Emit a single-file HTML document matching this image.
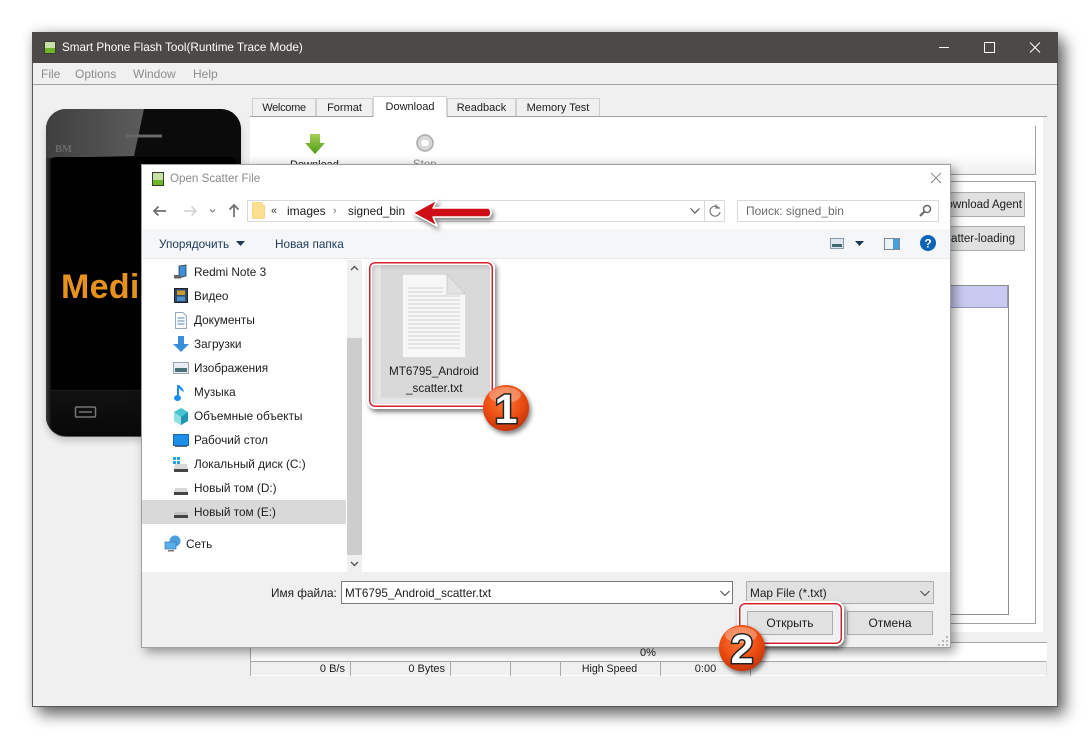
<!DOCTYPE html>
<html><head><meta charset="utf-8">
<style>
html,body{margin:0;padding:0;background:#fff;width:1091px;height:740px;overflow:hidden}
body{position:relative;font-family:"Liberation Sans",sans-serif;font-size:12px;color:#1c1c1c}
div,span.t,svg{position:absolute}
.t{position:absolute;white-space:nowrap;line-height:16px}
.tab{position:absolute;top:98px;height:18px;background:#f0f0f0;border:1px solid #d0d0d0;border-bottom:0;box-sizing:border-box;text-align:center;line-height:19px;font-size:11px}
.btn{position:absolute;background:#e1e1e1;border:1px solid #adadad;box-sizing:border-box;text-align:center}
.cell{position:absolute;top:661px;height:15px;border-left:1px solid #a8a8a8;box-sizing:border-box;text-align:right;padding-right:5px;line-height:16px;font-size:11px}
.nav{left:194px;font-size:11.8px}
</style></head><body>

<!-- main window -->
<div style="left:32px;top:32px;width:1026px;height:675px;background:#f0f0f0;box-shadow:7px 8px 14px rgba(0,0,0,.55),0 0 10px rgba(0,0,0,.18);border:1px solid #5a5a5a;border-top:0;box-sizing:border-box"></div>
<div style="left:32px;top:32px;width:1026px;height:31px;background:#4c4a48"></div>
<svg style="left:44px;top:41px" width="12" height="13" viewBox="0 0 12 13"><rect width="12" height="13" fill="#3b3a2e"/><rect x="1" y="1" width="10" height="6" fill="#c8dfa8"/><rect x="1" y="7" width="10" height="5" fill="#6fb52c"/></svg>
<span class="t" style="left:62px;top:40px;color:#fff;font-size:11.7px">Smart Phone Flash Tool(Runtime Trace Mode)</span>
<svg style="left:930px;top:32px" width="128" height="31" viewBox="0 0 128 31" fill="none" stroke="#fff" stroke-width="1"><path d="M9 15.500H19"/><rect x="54.500" y="10.500" width="10" height="10"/><path d="M100 10.500l10 10M110 10.500l-10 10"/></svg>
<div style="left:33px;top:84px;width:1024px;height:1px;background:#a0a0a0"></div>
<span class="t" style="left:41px;top:66px;color:#8c8c8c;font-size:12px">File</span>
<span class="t" style="left:75px;top:66px;color:#8c8c8c;font-size:12px">Options</span>
<span class="t" style="left:133px;top:66px;color:#8c8c8c;font-size:12px">Window</span>
<span class="t" style="left:193px;top:66px;color:#8c8c8c;font-size:12px">Help</span>

<!-- phone -->
<div style="left:46px;top:109px;width:195px;height:327px;border-radius:20px;background:#0b0b0b;box-shadow:0 1px 0 #555,0 5px 7px rgba(0,0,0,.18);overflow:hidden">
  <div style="left:0;top:280px;width:195px;height:47px;background:linear-gradient(#121212,#080808)"></div>
  <div style="left:0;top:0;width:5px;height:327px;background:linear-gradient(90deg,#3d3d3d,#111)"></div>
  <svg style="left:0;top:0" width="195" height="60" viewBox="0 0 195 60"><defs><linearGradient id="gl" x1="0" y1="0" x2="1" y2="0"><stop offset="0" stop-color="#3f3f3f"/><stop offset="1" stop-color="#5c5c5c"/></linearGradient></defs><path d="M0 49V0H98L88 47Z" fill="url(#gl)"/><path d="M80 27H116" stroke="#676767" stroke-width="3"/></svg>
  <div style="left:5px;top:48px;width:185px;height:233px;background:#000;border-radius:5px 5px 0 0;border-bottom:1px solid #1c1c1c"></div>
</div>
<span class="t" style="left:55px;top:142px;color:#6b6b6b;font:bold 10.500px/15px 'Liberation Serif',serif">BM</span>
<span class="t" style="left:61px;top:268px;color:#e8921e;font-weight:bold;font-size:34px;line-height:38px;letter-spacing:.3px">Medi</span>
<svg style="left:74px;top:405px" width="24" height="14" viewBox="0 0 24 14" fill="none" stroke="#757575" stroke-width="1.500"><rect x="1.500" y="2" width="20" height="10" rx="1"/><path d="M5 7H18"/></svg>

<!-- tabs & panel -->
<div class="tab" style="left:252px;width:64px;letter-spacing:-.3px">Welcome</div>
<div class="tab" style="left:316px;width:57px">Format</div>
<div class="tab" style="left:447px;width:69px">Readback</div>
<div class="tab" style="left:516px;width:84px">Memory Test</div>
<div style="left:250px;top:116px;width:797px;height:1px;background:#a0a0a0"></div>
<div style="left:250px;top:117px;width:793px;height:515px;background:#fff"></div>
<div class="tab" style="left:373px;top:96px;width:74px;height:21px;background:#fff;line-height:21px;border-color:#d4d4d4">Download</div>
<div style="left:251px;top:140px;width:784px;height:34px;background:linear-gradient(#fff 40%,#f0f0f0)"></div>
<div style="left:1035px;top:126px;width:1px;height:49px;background:#a0a0a0"></div>
<div style="left:250px;top:174px;width:786px;height:1px;background:#a0a0a0"></div>
<svg style="left:304px;top:133px" width="22" height="22" viewBox="0 0 22 22"><defs><linearGradient id="g" x1="0" y1="0" x2="0" y2="1"><stop offset="0" stop-color="#a9d05a"/><stop offset="1" stop-color="#4f9a10"/></linearGradient></defs><path d="M6 1H16V10H21L11 21L1 10H6Z" fill="url(#g)"/></svg>
<span class="t" style="left:290px;top:157px;font-size:11px">Download</span>
<svg style="left:416px;top:134px" width="18" height="18" viewBox="0 0 18 18"><circle cx="9" cy="9" r="8" fill="#d8d8d8" stroke="#a8a8a8" stroke-width="1.500"/><rect x="5.500" y="6" width="7" height="6" rx="1.500" fill="#fff"/></svg>
<span class="t" style="left:413px;top:157px;color:#888;font-size:11.500px">Stop</span>

<div style="left:250px;top:181px;width:786px;height:443px;border:1px solid #a0a0a0;box-sizing:border-box;background:#fff"></div>
<div class="btn" style="left:900px;top:192px;width:125px;height:25px;line-height:24px;text-align:right;padding-right:2px;font-size:11.500px">Download Agent</div>
<div class="btn" style="left:900px;top:226px;width:125px;height:25px;line-height:24px;text-align:right;padding-right:9px;font-size:11.500px">Scatter-loading</div>
<div style="left:900px;top:285px;width:109px;height:330px;border:1px solid #8f8f8f;box-sizing:border-box;background:#fff"></div>
<div style="left:900px;top:286px;width:108px;height:22px;background:#c9c9f2;border-bottom:1px solid #9a9ab8;border-right:1px solid #9a9ab8;box-sizing:border-box"></div>

<!-- status -->
<div style="left:250px;top:642px;width:797px;height:19px;background:#fff;border-top:1px solid #a8a8a8;border-left:1px solid #a8a8a8;box-sizing:border-box;font-size:11px"><span class="t" style="left:389px;top:2px">0%</span></div>
<div style="left:250px;top:661px;width:797px;height:1px;background:#a8a8a8"></div>
<div style="left:250px;top:675px;width:797px;height:1px;background:#fff"></div>
<div class="cell" style="left:250px;width:100px">0 B/s</div>
<div class="cell" style="left:350px;width:100px">0 Bytes</div>
<div class="cell" style="left:450px;width:60px"></div>
<div class="cell" style="left:510px;width:50px"></div>
<div class="cell" style="left:560px;width:100px;text-align:center;padding:0 2px 0 0;font-size:10.600px">High Speed</div>
<div class="cell" style="left:660px;width:90px;text-align:center;padding:0">0:00</div>
<div class="cell" style="left:750px;width:297px;border-right:1px solid #e0e0e0"></div>

<!-- dialog -->
<div style="left:141px;top:164px;width:810px;height:484px;background:#fff;border:1px solid #a0a0a0;box-sizing:border-box;box-shadow:4px 4px 10px rgba(0,0,0,.4)"></div>
<svg style="left:152px;top:172px" width="12" height="14" viewBox="0 0 12 14"><rect width="12" height="14" fill="#3b3a2e"/><rect x="1" y="1" width="10" height="7" fill="#c8dfa8"/><rect x="1" y="8" width="10" height="5" fill="#6fb52c"/></svg>
<span class="t" style="left:170px;top:171px;color:#8a8a8a;font-size:11.600px">Open Scatter File</span>
<svg style="left:930px;top:172px" width="12" height="12" viewBox="0 0 12 12" fill="none" stroke="#8a8a8a"><path d="M1 1l10 10M11 1L1 11"/></svg>

<svg style="left:152px;top:202px" width="92" height="18" viewBox="0 0 92 18" fill="none" stroke-width="1.700"><path d="M14 9H2M6.500 4.500L2 9l4.500 4.500" stroke="#6f6f6f"/><path d="M32 9h12M39.500 4.500L44 9l-4.500 4.500" stroke="#d4d4d4"/><path d="M58 7.500l2.500 2.500 2.500-2.500" stroke="#8a8a8a" stroke-width="1.300"/><path d="M82 15V3M77.500 7.500L82 3l4.500 4.500" stroke="#6f6f6f"/></svg>
<div style="left:247px;top:200px;width:478px;height:22px;border:1px solid #d9d9d9;box-sizing:border-box;background:#fff"></div>
<svg style="left:252px;top:202px" width="13" height="17" viewBox="0 0 13 17"><path d="M0 0H10V3H12.500V16.500H0Z" fill="#fbe08f" stroke="#e6c86b" stroke-width=".6"/></svg>
<span class="t" style="left:271px;top:203px;font-size:11px;color:#333">«</span>
<span class="t" style="left:287px;top:203px;font-size:12px">images</span>
<span class="t" style="left:333px;top:203px;font-size:11px;color:#777">›</span>
<span class="t" style="left:348px;top:203px;font-size:11.800px">signed_bin</span>
<svg style="left:689px;top:206px" width="12" height="10" viewBox="0 0 12 10" fill="none" stroke="#555" stroke-width="1.200"><path d="M1.500 2.500L6 7l4.500-4.500"/></svg>
<div style="left:704px;top:201px;width:1px;height:20px;background:#d9d9d9"></div>
<svg style="left:708px;top:204px" width="14" height="14" viewBox="0 0 14 14" fill="none" stroke="#777" stroke-width="1.200"><path d="M10.500 3.500A5 5 0 1 0 12 8"/><path d="M8 .5V4H12"/></svg>
<div style="left:737px;top:200px;width:202px;height:22px;border:1px solid #d9d9d9;box-sizing:border-box;background:#fff"></div>
<span class="t" style="left:746px;top:203px;color:#6d6d6d;font-size:12px">Поиск: signed_bin</span>
<svg style="left:918px;top:204px" width="14" height="14" viewBox="0 0 14 14" fill="none" stroke="#666"><circle cx="9" cy="5" r="3.500" stroke-width="1.500"/><path d="M6.500 7.500L2 12" stroke-width="2"/></svg>

<div style="left:142px;top:229px;width:808px;height:30px;background:#f5f6f7;border-bottom:1px solid #e8e9ea;box-sizing:border-box"></div>
<span class="t" style="left:159px;top:236px;color:#1e395b;font-size:11.800px">Упорядочить</span>
<svg style="left:236px;top:241px" width="9" height="6" viewBox="0 0 9 6"><path d="M0 0H9L4.500 5Z" fill="#1e395b"/></svg>
<span class="t" style="left:275px;top:236px;color:#1e395b;font-size:11.800px">Новая папка</span>
<svg style="left:830px;top:238px" width="14" height="12" viewBox="0 0 14 12"><rect x=".5" y=".5" width="13" height="10" fill="#dfe7ee" stroke="#8a9aa8"/><rect x="2" y="6" width="10" height="3" fill="#3f6a70"/></svg>
<svg style="left:855px;top:241px" width="9" height="6" viewBox="0 0 9 6"><path d="M0 0H9L4.500 5Z" fill="#1e395b"/></svg>
<svg style="left:884px;top:238px" width="16" height="12" viewBox="0 0 16 12"><rect x=".5" y=".5" width="15" height="11" fill="#eef3f8" stroke="#7a8a98"/><rect x="9" y="1" width="6" height="10" fill="#4a9be0"/></svg>
<svg style="left:920px;top:235px" width="16" height="16" viewBox="0 0 16 16"><circle cx="8" cy="8" r="8" fill="#0a63b5"/><text x="8" y="12.500" text-anchor="middle" fill="#fff" font-family="Liberation Sans" font-weight="bold" font-size="12">?</text></svg>

<!-- nav pane -->
<div style="left:142px;top:500px;width:204px;height:24px;background:#d9d9d9"></div>
<div style="left:347px;top:260px;width:15px;height:312px;background:#f0f0f0"></div>
<div style="left:347px;top:338px;width:15px;height:217px;background:#cdcdcd"></div>
<svg style="left:349px;top:264px" width="11" height="8" viewBox="0 0 11 8" fill="none" stroke="#555" stroke-width="1.400"><path d="M2 6l3.500-3.500L9 6"/></svg>
<svg style="left:349px;top:560px" width="11" height="8" viewBox="0 0 11 8" fill="none" stroke="#555" stroke-width="1.400"><path d="M2 2l3.500 3.500L9 2"/></svg>
<span class="t nav" style="top:264px">Redmi Note 3</span>
<span class="t nav" style="top:288px">Видео</span>
<span class="t nav" style="top:312px">Документы</span>
<span class="t nav" style="top:336px">Загрузки</span>
<span class="t nav" style="top:360px">Изображения</span>
<span class="t nav" style="top:384px">Музыка</span>
<span class="t nav" style="top:408px">Объемные объекты</span>
<span class="t nav" style="top:432px">Рабочий стол</span>
<span class="t nav" style="top:456px">Локальный диск (C:)</span>
<span class="t nav" style="top:480px">Новый том (D:)</span>
<span class="t nav" style="top:504px">Новый том (E:)</span>
<span class="t" style="left:186px;top:536px;font-size:11.800px">Сеть</span>

<svg style="left:172px;top:263px" width="18" height="270" viewBox="0 0 18 270">
<!-- phone -->
<path d="M7 3L14 2V13L7 15Z" fill="#3c8fd8" stroke="#3a3a3a" stroke-width=".8"/><rect x="2" y="12" width="7" height="3.500" fill="#666"/>
<!-- video -->
<rect x="2.500" y="25.500" width="13" height="14" fill="#2f4870" stroke="#222"/><rect x="5" y="27.500" width="8" height="4.500" fill="#c89a30"/><rect x="5" y="33.500" width="8" height="4.500" fill="#4f8fc8"/>
<!-- docs -->
<path d="M3.500 49.500H11L14.500 53V65.500H3.500Z" fill="#fafcfe" stroke="#9aa8b4"/><path d="M5.500 55H12.500M5.500 58H12.500M5.500 61H12.500" stroke="#5a8cb8"/>
<!-- downloads -->
<path d="M6 73H12V81H17L9 89L1 81H6Z" fill="#3a8ede"/>
<!-- images -->
<rect x="1.500" y="99.500" width="15" height="11" fill="#e8eef4" stroke="#9aa4ae"/><rect x="3" y="105" width="12" height="4" fill="#4a7078"/>
<!-- music -->
<path d="M6 122V135" stroke="#1f8ee8" stroke-width="2"/><ellipse cx="5.500" cy="135" rx="3.500" ry="3" fill="#1f8ee8"/><path d="M6 122Q7 127 12 129Q11 125 7 122Z" fill="#1f8ee8"/>
<!-- 3d -->
<path d="M9 145L16 149V158L9 162L2 158V149Z" fill="#45c4d0"/><path d="M9 154L16 149V158L9 162Z" fill="#1d94b4"/><path d="M2 149L9 154V162L2 158Z" fill="#8ee0e0"/>
<!-- desktop -->
<rect x="1.500" y="171.500" width="15" height="11" fill="#1f8ee8" stroke="#1668b0"/><rect x="3" y="183" width="12" height="1" fill="#666"/>
<!-- C -->
<rect x="1" y="194" width="3" height="3" fill="#29a0e0"/><rect x="5" y="194" width="3" height="3" fill="#29a0e0"/><rect x="1" y="198" width="3" height="3" fill="#29a0e0"/><rect x="5" y="198" width="3" height="3" fill="#29a0e0"/><path d="M3 201H15L16 206H2Z" fill="#d8d8d8"/><rect x="2" y="206" width="14" height="3" fill="#444"/>
<!-- D -->
<path d="M3 225H15L16 229H2Z" fill="#d8d8d8"/><rect x="2" y="229" width="14" height="3" fill="#444"/>
<!-- E -->
<path d="M3 249H15L16 252H2Z" fill="#c4c4c4"/><rect x="2" y="252" width="14" height="3" fill="#444"/>
</svg>
<svg style="left:164px;top:535px" width="18" height="18" viewBox="0 0 18 18"><circle cx="11" cy="6" r="5.500" fill="#4d9edc"/><rect x="1" y="7" width="11" height="7" fill="#5ab0ea" stroke="#3a7ab0" stroke-width=".7"/><rect x="4" y="15" width="6" height="1.500" fill="#777"/></svg>

<!-- file selection -->
<div style="left:372px;top:265px;width:118px;height:139px;background:#e6e6e6"></div>
<div style="left:381px;top:265px;width:109px;height:133px;background:#d9d9d9"></div>
<div style="left:367px;top:260px;width:128px;height:149px;border-radius:8px;box-sizing:border-box;border:2px solid #fff;box-shadow:2px 3px 5px rgba(0,0,0,.5),inset 0 0 0 1.500px #d2202c,inset 0 0 0 3px #fff,inset 2px 2px 4px 3px rgba(0,0,0,.12)"></div>
<svg style="left:402px;top:274px" width="64" height="84" viewBox="0 0 64 84"><path d="M.5.500H45L63.500 20V83.500H.5Z" fill="#f7f7f7" stroke="#dcdcdc"/><path d="M45 .5V20H63.500Z" fill="#e2e2e2" stroke="#cfcfcf"/><path d="M6 14H41M6 18H41M6 22H58M6 26H58M6 30H58M6 34H58M6 38H58M6 42H58M6 46H58M6 50H58M6 54H58M6 58H58M6 62H58M6 66H58M6 70H58M6 74H58" stroke="#d2d2d2" stroke-width="1"/></svg>
<span class="t" style="left:389px;top:364px;font-size:11.700px">MT6795_Android</span>
<span class="t" style="left:406px;top:381px;font-size:11.700px">_scatter.txt</span>

<!-- bottom panel -->
<div style="left:142px;top:572px;width:808px;height:75px;background:#f0f0f0"></div>
<span class="t" style="left:271px;top:585px;font-size:11.800px">Имя файла:</span>
<div style="left:341px;top:581px;width:392px;height:23px;background:#fff;border:1px solid #7a7a7a;box-sizing:border-box"></div>
<span class="t" style="left:345px;top:586px;font-size:11.700px">MT6795_Android_scatter.txt</span>
<svg style="left:719px;top:589px" width="12" height="9" viewBox="0 0 12 9" fill="none" stroke="#555" stroke-width="1.200"><path d="M1.500 2L6 6.500 10.500 2"/></svg>
<div class="btn" style="left:746px;top:581px;width:188px;height:23px"></div>
<span class="t" style="left:750px;top:585px;font-size:11.800px">Map File (*.txt)</span>
<svg style="left:919px;top:589px" width="12" height="9" viewBox="0 0 12 9" fill="none" stroke="#555" stroke-width="1.200"><path d="M1.500 2L6 6.500 10.500 2"/></svg>
<div class="btn" style="left:847px;top:611px;width:86px;height:24px;line-height:22px">Отмена</div>
<div style="left:737px;top:601px;width:107px;height:45px;border-radius:8px;box-sizing:border-box;border:2px solid #fff;box-shadow:2px 3px 5px rgba(0,0,0,.5),inset 0 0 0 1.500px #d2202c,inset 0 0 0 3px #fff"></div>
<div class="btn" style="left:747px;top:611px;width:86px;height:24px;line-height:22px">Открыть</div>
<svg style="left:938px;top:636px" width="12" height="11" viewBox="0 0 12 11" fill="#b8b8b8"><rect x="8" y="0" width="2" height="2"/><rect x="4" y="4" width="2" height="2"/><rect x="8" y="4" width="2" height="2"/><rect x="0" y="8" width="2" height="2"/><rect x="4" y="8" width="2" height="2"/><rect x="8" y="8" width="2" height="2"/></svg>

<!-- annotations -->
<svg style="left:0;top:0" width="1091" height="740" viewBox="0 0 1091 740">
<defs>
<radialGradient id="b" cx=".45" cy=".35" r=".75"><stop offset="0" stop-color="#ff7a3a"/><stop offset=".6" stop-color="#e8480e"/><stop offset="1" stop-color="#b02c04"/></radialGradient>
<filter id="s" x="-30%" y="-30%" width="170%" height="170%"><feDropShadow dx="2" dy="3" stdDeviation="2.500" flood-color="#000" flood-opacity=".5"/></filter>
</defs>
<path d="M437 200L413 213L437 226L433 217H489Q493 213 489 208H433Z" fill="#cf0f14" stroke="#fff" stroke-width="1.500" stroke-linejoin="round" filter="url(#s)"/>
<g filter="url(#s)"><circle cx="506" cy="408" r="23" fill="url(#b)"/><ellipse cx="505" cy="395" rx="16" ry="8" fill="#fff" opacity=".3"/></g>
<text x="506" y="423" text-anchor="middle" font-family="Liberation Sans" font-weight="bold" font-size="41" fill="#fff" stroke="#222" stroke-width="3" paint-order="stroke">1</text>
<g filter="url(#s)"><circle cx="742" cy="648" r="23" fill="url(#b)"/><ellipse cx="741" cy="635" rx="16" ry="8" fill="#fff" opacity=".3"/></g>
<text x="742" y="663" text-anchor="middle" font-family="Liberation Sans" font-weight="bold" font-size="41" fill="#fff" stroke="#222" stroke-width="3" paint-order="stroke">2</text>
</svg>
</body></html>
